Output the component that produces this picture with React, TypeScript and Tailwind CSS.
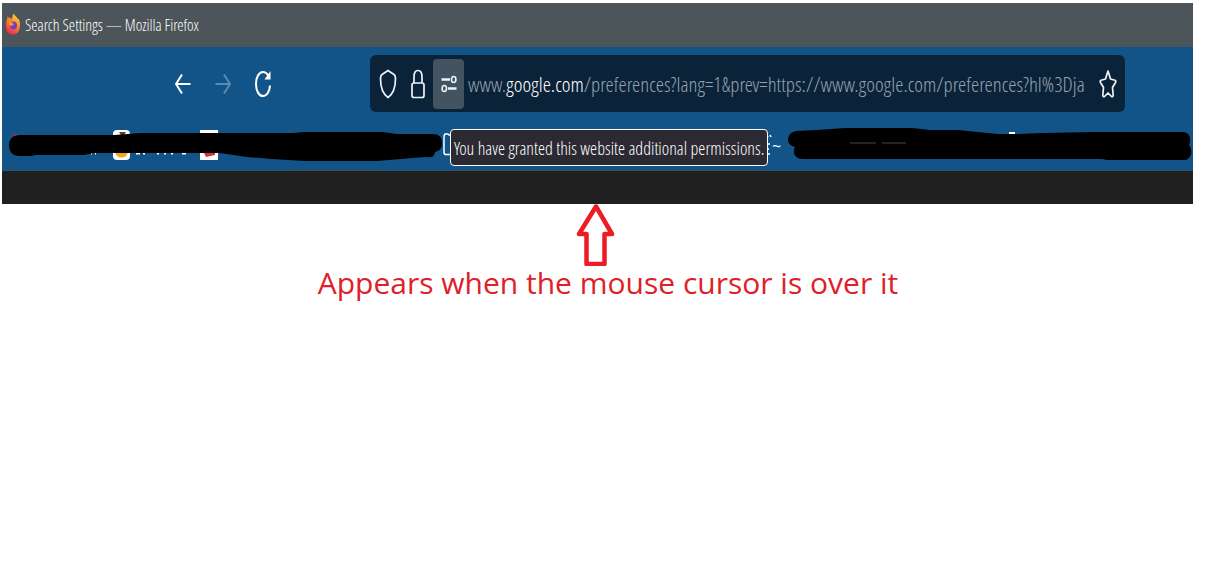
import type { ReactNode } from 'react';

const uiFont = "font-['Open_Sans_Condensed_Light','Open_Sans_Condensed','Open_Sans',sans-serif]";

function FirefoxLogo() {
  return (
    <svg width="16" height="24" viewBox="0 0 16 24" aria-hidden="true">
      <defs>
        <linearGradient id="flame" x1="0.8" y1="0" x2="0.3" y2="1">
          <stop offset="0" stopColor="#ffe14a" />
          <stop offset="0.45" stopColor="#ff8a1e" />
          <stop offset="1" stopColor="#f5225c" />
        </linearGradient>
      </defs>
      <path
        d="M8.500 0.500C10 3 12 4 13 6.500L13.500 5.500C15 8.500 15.300 11 14.800 14.500C14 19 11.500 21.500 8 21.500C4 21.500 1.300 19 1 14C0.800 10.500 1.300 7.500 2.500 5V3L4 5.500L5 4L6 6.500C7.500 5.500 7.300 2.500 8.500 0.500Z"
        fill="url(#flame)"
      />
      <ellipse cx="8.500" cy="12.500" rx="3.500" ry="4" fill="#7540c8" />
      <path d="M4 9C6 8.500 8 10 9 11.500C7.500 12 7 13 5.500 13C4.500 12 4 10.500 4 9Z" fill="#ff9a1f" />
    </svg>
  );
}

function ArrowIcon({ forward = false }: { forward?: boolean }) {
  return (
    <svg width="16" height="22" viewBox="0 0 16 22" fill="none" stroke="currentColor" strokeWidth="2" aria-hidden="true">
      {forward ? <path d="M0.500 11H15M9 1.500L15 11L9 20.500" /> : <path d="M15.500 11H1M7 1.500L1 11L7 20.500" />}
    </svg>
  );
}

function ReloadIcon() {
  return (
    <svg width="18" height="28" viewBox="0 0 18 28" fill="none" stroke="currentColor" strokeWidth="2" aria-hidden="true">
      <path d="M14.500 6C13 3.300 11.200 2 9 2C5 2 2 7 2 14C2 21 5 26 9 26C12.800 26 15.700 21.500 16 15.500" />
      <path d="M16.500 1V9.500H10.500Z" fill="currentColor" stroke="none" />
    </svg>
  );
}

function ShieldIcon() {
  return (
    <svg width="18" height="30" viewBox="0 0 18 30" fill="none" stroke="currentColor" strokeWidth="1.700" aria-hidden="true">
      <path d="M9 1.500L15 5.500C16 6.200 16.500 7.500 16.500 9.500C16.500 18 14 25 9 28.500C4 25 1.500 18 1.500 9.500C1.500 7.500 2 6.200 3 5.500Z" />
    </svg>
  );
}

function LockIcon() {
  return (
    <svg width="14" height="30" viewBox="0 0 14 30" fill="none" stroke="currentColor" strokeWidth="1.700" aria-hidden="true">
      <rect x="1" y="14" width="12" height="14.500" rx="2" />
      <path d="M3 14V8C3 4 4.500 1.500 7 1.500C9.500 1.500 11 4 11 8V14" />
    </svg>
  );
}

function PermissionsIcon() {
  return (
    <svg width="16" height="18" viewBox="0 0 16 18" fill="none" stroke="currentColor" strokeWidth="1.600" aria-hidden="true">
      <path d="M0.500 4.500H9" strokeWidth="2.500" />
      <ellipse cx="12.700" cy="4.500" rx="2.200" ry="3" />
      <path d="M7 13.500H15.500" strokeWidth="2.500" />
      <ellipse cx="3.300" cy="13.500" rx="2.200" ry="3" />
    </svg>
  );
}

function StarIcon() {
  return (
    <svg width="18" height="30" viewBox="0 0 18 30" fill="none" stroke="currentColor" strokeWidth="1.700" strokeLinejoin="round" aria-hidden="true">
      <path d="M9 2L11.500 10L16 11.200C17 11.600 17 12.700 16.500 13.500L13.500 18.500L14.200 26C14.200 27.500 13.300 28 12.500 27.500L9 24L5.500 27.500C4.700 28 3.800 27.500 3.800 26L4.500 18.500L1.500 13.500C1 12.700 1 11.600 2 11.200L6.500 10Z" />
    </svg>
  );
}

function LeftRedaction() {
  return (
    <svg width="440" height="47" viewBox="0 0 440 47" className="shrink-0" aria-hidden="true">
      <rect x="111" y="7" width="17" height="30" rx="4" fill="#fff" />
      <path d="M117 9H124L122 12H119Z" fill="#444" />
      <ellipse cx="119.500" cy="30" rx="6" ry="4.500" fill="#f5a623" />
      <rect x="198" y="7" width="18" height="30" fill="#fff" />
      <path d="M202 30H206L213 29V32L204 34Z" fill="#d9303e" />
      <path d="M134 30H138M141 30H143M155 30H157M162 30H164M169 30H171M180 30H184M89 30H90M93 30H94" stroke="#fff" strokeWidth="3" />
      <path d="M11 12H15" stroke="#a3275d" strokeWidth="2" />
      <path
        d="M7 22C7 16 11 12 18 12H112L138 10H290L302 9H380L395 11H430C437 11 440 14 440 20C440 26 437 28 433 29C432 34 430 35 423 34L375 38H302L270 36L245 34L217 30H92L82 32H34L28 33H17C11 33 7 29 7 22Z"
        fill="#000"
      />
    </svg>
  );
}

function RightRedaction() {
  return (
    <svg width="405" height="47" viewBox="0 0 405 47" className="shrink-0" aria-hidden="true">
      <path d="M221 10H227" stroke="#fff" strokeWidth="2" />
      <path
        d="M8 8L28 7L57 5H124L142 7H170L190 9L210 11L230 11L255 10L306 9H395C401 9 404 15 401 22C405 26 404 36 397 37H319L314 36H15C7 36 4 30 7 24C-3 22 -2 10 8 8Z"
        fill="#000"
      />
      <path d="M62 20H88M94 20H118" stroke="#42464a" strokeWidth="1" />
    </svg>
  );
}

function IconButton({ label, className, children }: { label: string; className?: string; children: ReactNode }) {
  return (
    <button type="button" aria-label={label} className={`flex h-[50px] shrink-0 items-center justify-center ${className ?? ''}`}>
      {children}
    </button>
  );
}

function AddressBar() {
  return (
    <div className="flex h-[57px] min-w-0 flex-1 items-center rounded-md bg-[#0b2339] pr-2 pl-1 text-[#eef3f8]">
      <IconButton label="Tracking protection" className="w-7">
        <ShieldIcon />
      </IconButton>
      <IconButton label="Connection secure" className="w-[31px]">
        <LockIcon />
      </IconButton>
      <div className="relative shrink-0">
        <IconButton label="Site permissions" className="w-[31px] rounded-sm bg-[#435361]">
          <PermissionsIcon />
        </IconButton>
        <div
          role="tooltip"
          className="absolute top-[70px] left-[17px] z-10 flex h-[37px] items-center rounded-[4px] border border-white bg-[#2b2a33] px-[3px] pt-[2px] text-[18px] whitespace-nowrap text-white"
        >
          You have granted this website additional permissions.
        </div>
      </div>
      <p className="ml-1 min-w-0 flex-1 overflow-hidden text-[21px] leading-8 whitespace-nowrap text-[#94a1ae]">
        www.<span className="text-white">google.com</span>/preferences?lang=1&amp;prev=https://www.google.com/preferences?hl%3Dja
      </p>
      <IconButton label="Bookmark this page" className="w-[18px]">
        <StarIcon />
      </IconButton>
    </div>
  );
}

export default function App() {
  return (
    <main className="min-h-screen bg-white pt-[3px]">
      <div className="mr-[19px] ml-[2px]">
        <div className={uiFont}>
          <header className="flex h-11 items-center gap-1 bg-[#4c555a] pl-[3px] text-white">
            <FirefoxLogo />
            <h1 className="text-[16px]">Search Settings — Mozilla Firefox</h1>
          </header>

          <nav className="flex h-[73px] items-center bg-[#135488] pr-[68px] pl-[165px] text-white">
            <div className="mr-[91px] flex shrink-0 gap-2">
              <IconButton label="Back" className="w-8">
                <ArrowIcon />
              </IconButton>
              <button type="button" aria-label="Forward" disabled className="flex h-[50px] w-8 items-center justify-center text-[#5f8aae]">
                <ArrowIcon forward />
              </button>
              <IconButton label="Reload" className="w-8">
                <ReloadIcon />
              </IconButton>
            </div>
            <AddressBar />
          </nav>

          <div className="flex h-[51px] items-start justify-between overflow-hidden border-b border-[#34505c] bg-[#135488] pt-[3px]">
            <div className="flex">
              <LeftRedaction />
              <svg width="16" height="47" viewBox="0 0 16 47" fill="none" stroke="#fff" strokeWidth="1.500" aria-hidden="true">
                <path d="M13 12H7L6 11H3L2 13V30L3 31.500H10" />
              </svg>
            </div>
            <div className="flex text-white">
              <svg width="7" height="47" viewBox="0 0 7 47" stroke="#fff" strokeWidth="1.500" fill="none" aria-hidden="true">
                <path d="M2 15L3 13M5 12L6 14M0 21H5M2 26H4M0 31H5" />
              </svg>
              <span className="w-4 font-['Open_Sans',sans-serif] text-base leading-[46px]">~</span>
              <RightRedaction />
            </div>
          </div>

          <div className="h-[33px] bg-[#202020]" />
        </div>

        <div className="pr-1">
          <svg width="40" height="62" viewBox="0 0 40 62" className="mx-auto block" fill="none" stroke="#ed1c24" strokeWidth="4.500" aria-hidden="true">
            <path d="M20 2.500L36 30H28.500V60H10.500V30H3Z" strokeLinejoin="round" />
          </svg>
        </div>
      </div>

      <p className="pl-1 text-center font-['Open_Sans',sans-serif] text-[30px] leading-[34px] text-[#e02028]">
        Appears when the mouse cursor is over it
      </p>
    </main>
  );
}
